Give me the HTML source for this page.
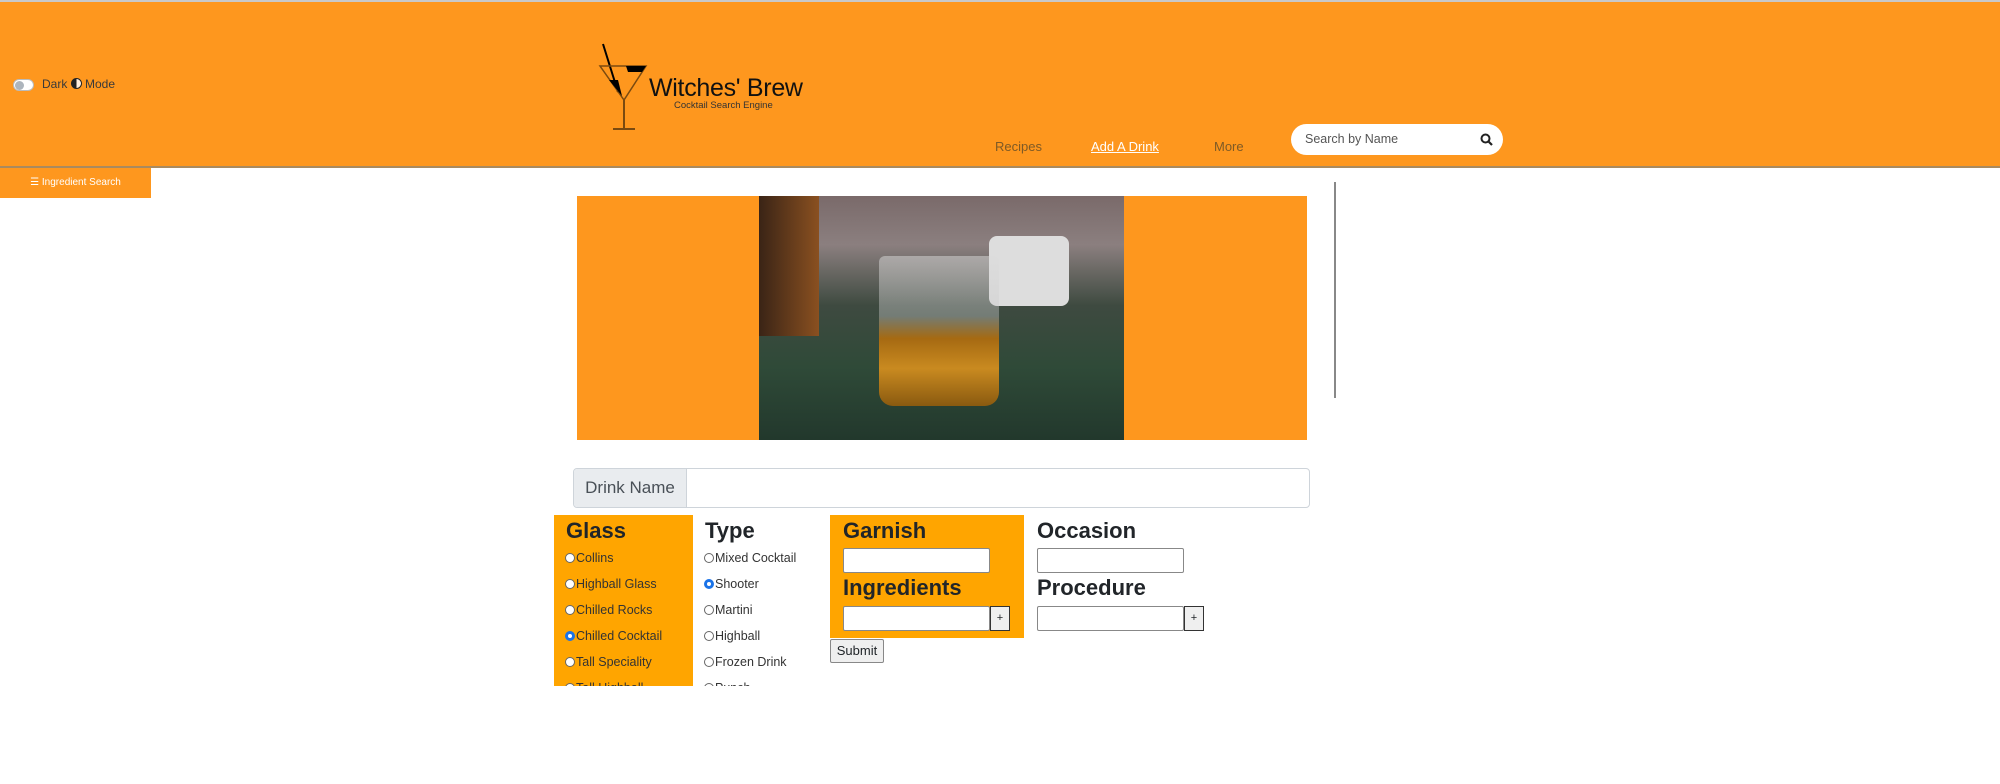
<!DOCTYPE html>
<html><head><meta charset="utf-8"><style>
*{box-sizing:border-box;margin:0;padding:0}
body{width:2000px;height:784px;overflow:hidden;background:#fff;font-family:"Liberation Sans",sans-serif;color:#212529;position:relative}
.abs{position:absolute}
header{position:absolute;left:0;top:0;width:2000px;height:168px;background:#fe971e;border-top:2px solid #c9c9c9;border-bottom:2px solid #a98a5f}
.nav{font-size:13px;color:#7e5a26;top:137px}
.h{font-size:22px;font-weight:600;color:#212529;position:absolute}
.r{position:absolute;font-size:12.5px;color:#333;display:flex;align-items:center}
.r i{display:inline-block;width:10px;height:10px;border:1px solid #666;border-radius:50%;background:#fff;margin-right:1px}
.r i.on{border:3px solid #1a73e8}
.inp{position:absolute;background:#fff;border:1px solid #888;border-radius:2px}
.pl{position:absolute;width:20px;height:25px;border:1px solid #333;background:#efefef;font-size:11px;text-align:center;line-height:22px}
</style></head><body>
<header>
 <div class="abs" style="left:13px;top:77px;width:21px;height:12px;border-radius:6px;background:#fff;border:1px solid #bbb"><div style="width:9px;height:9px;border-radius:50%;background:#adb5bd;margin:1px"></div></div>
 <div class="abs" style="left:42px;top:75px;font-size:12px;color:#3a3a3a">Dark <span style="display:inline-block;width:11px;height:11px;border-radius:50%;border:1.5px solid #222;background:linear-gradient(90deg,#222 50%,#fed 50%);vertical-align:-1px"></span> Mode</div>
 <svg class="abs" style="left:598px;top:38px" width="50" height="92" viewBox="0 0 50 92">
  <line x1="5" y1="4" x2="20" y2="52" stroke="#000" stroke-width="2"/>
  <polygon points="2,26 48,26 26,60" fill="none" stroke="#7a4a10" stroke-width="1.5"/>
  <polygon points="28,26 48,26 44,32 30,32" fill="#000"/>
  <polygon points="11,40 20,40 24,56" fill="#000"/>
  <line x1="26" y1="60" x2="26" y2="88" stroke="#7a4a10" stroke-width="2"/>
  <line x1="15" y1="89" x2="37" y2="89" stroke="#7a4a10" stroke-width="2"/>
 </svg>
 <div class="abs" style="left:649px;top:72px;font-size:25px;color:#111;letter-spacing:-0.3px">Witches' Brew</div>
 <div class="abs" style="left:674px;top:98px;font-size:9.5px;color:#333">Cocktail Search Engine</div>
 <div class="abs nav" style="left:995px">Recipes</div>
 <div class="abs nav" style="left:1091px;color:#fff;text-decoration:underline">Add A Drink</div>
 <div class="abs nav" style="left:1214px">More</div>
 <div class="abs" style="left:1291px;top:122px;width:212px;height:31px;background:#fff;border-radius:16px;font-size:12.5px;color:#555;padding:8px 0 0 14px">Search by Name
  <svg class="abs" style="right:10px;top:9px" width="13" height="13" viewBox="0 0 13 13"><circle cx="5.5" cy="5.5" r="4" fill="none" stroke="#222" stroke-width="2"/><line x1="8.5" y1="8.5" x2="12" y2="12" stroke="#222" stroke-width="2.2"/></svg></div>
</header>
<div class="abs" style="left:0;top:168px;width:151px;height:30px;background:#fe971e;color:#fff;font-size:10px;text-align:center;line-height:30px">☰ Ingredient Search</div>
<div class="abs" style="left:577px;top:196px;width:730px;height:244px;background:#fe971e"></div>
<div class="abs" style="left:759px;top:196px;width:365px;height:244px;overflow:hidden;background:linear-gradient(180deg,#7a6a6a 0%,#8b7f7f 20%,#3e4a40 45%,#2f4a38 70%,#22382c 100%)">
 <div class="abs" style="left:0;top:0;width:60px;height:140px;background:linear-gradient(90deg,#3a2416,#8a5020)"></div>
 <div class="abs" style="left:230px;top:40px;width:80px;height:70px;border-radius:8px;background:#ddd"></div>
 <div class="abs" style="left:120px;top:60px;width:120px;height:150px;border-radius:6px 6px 14px 14px;background:linear-gradient(180deg,rgba(220,220,220,.5) 0%,rgba(200,200,200,.4) 40%,#a66a12 55%,#c98a20 75%,#8a5a10 100%)"></div>
</div>
<div class="abs" style="left:1334px;top:182px;width:2px;height:216px;background:#888"></div>
<div class="abs" style="left:573px;top:468px;width:737px;height:40px;border:1px solid #ced4da;border-radius:4px;overflow:hidden">
 <div style="width:113px;height:100%;background:#e9ecef;border-right:1px solid #ced4da;font-size:17px;color:#495057;line-height:38px;text-align:center">Drink Name</div>
</div>
<div class="abs" style="left:554px;top:515px;width:139px;height:171px;background:#ffa500"></div>
<div class="abs" style="left:830px;top:515px;width:194px;height:123px;background:#ffa500"></div>
<div class="h" style="left:566px;top:518px">Glass</div>
<div class="h" style="left:705px;top:518px">Type</div>
<div class="h" style="left:843px;top:518px">Garnish</div>
<div class="h" style="left:1037px;top:518px">Occasion</div>
<div class="h" style="left:843px;top:575px">Ingredients</div>
<div class="h" style="left:1037px;top:575px">Procedure</div>
<div style="position:absolute;left:0;top:0;width:2000px;height:686px;overflow:hidden">
 <div class="r" style="left:565px;top:551px"><i></i>Collins</div>
 <div class="r" style="left:565px;top:577px"><i></i>Highball Glass</div>
 <div class="r" style="left:565px;top:603px"><i></i>Chilled Rocks</div>
 <div class="r" style="left:565px;top:629px"><i class="on"></i>Chilled Cocktail</div>
 <div class="r" style="left:565px;top:655px"><i></i>Tall Speciality</div>
 <div class="r" style="left:565px;top:681px"><i></i>Tall Highball</div>
 <div class="r" style="left:704px;top:551px"><i></i>Mixed Cocktail</div>
 <div class="r" style="left:704px;top:577px"><i class="on"></i>Shooter</div>
 <div class="r" style="left:704px;top:603px"><i></i>Martini</div>
 <div class="r" style="left:704px;top:629px"><i></i>Highball</div>
 <div class="r" style="left:704px;top:655px"><i></i>Frozen Drink</div>
 <div class="r" style="left:704px;top:681px"><i></i>Punch</div>
</div>
<div class="inp" style="left:843px;top:548px;width:147px;height:25px"></div>
<div class="inp" style="left:1037px;top:548px;width:147px;height:25px"></div>
<div class="inp" style="left:843px;top:606px;width:147px;height:25px"></div>
<div class="pl" style="left:990px;top:606px">+</div>
<div class="inp" style="left:1037px;top:606px;width:147px;height:25px"></div>
<div class="pl" style="left:1184px;top:606px">+</div>
<div class="abs" style="left:830px;top:639px;width:54px;height:24px;border:1px solid #888;background:#efefef;border-radius:2px;font-size:13px;text-align:center;line-height:22px">Submit</div>
</body></html>
